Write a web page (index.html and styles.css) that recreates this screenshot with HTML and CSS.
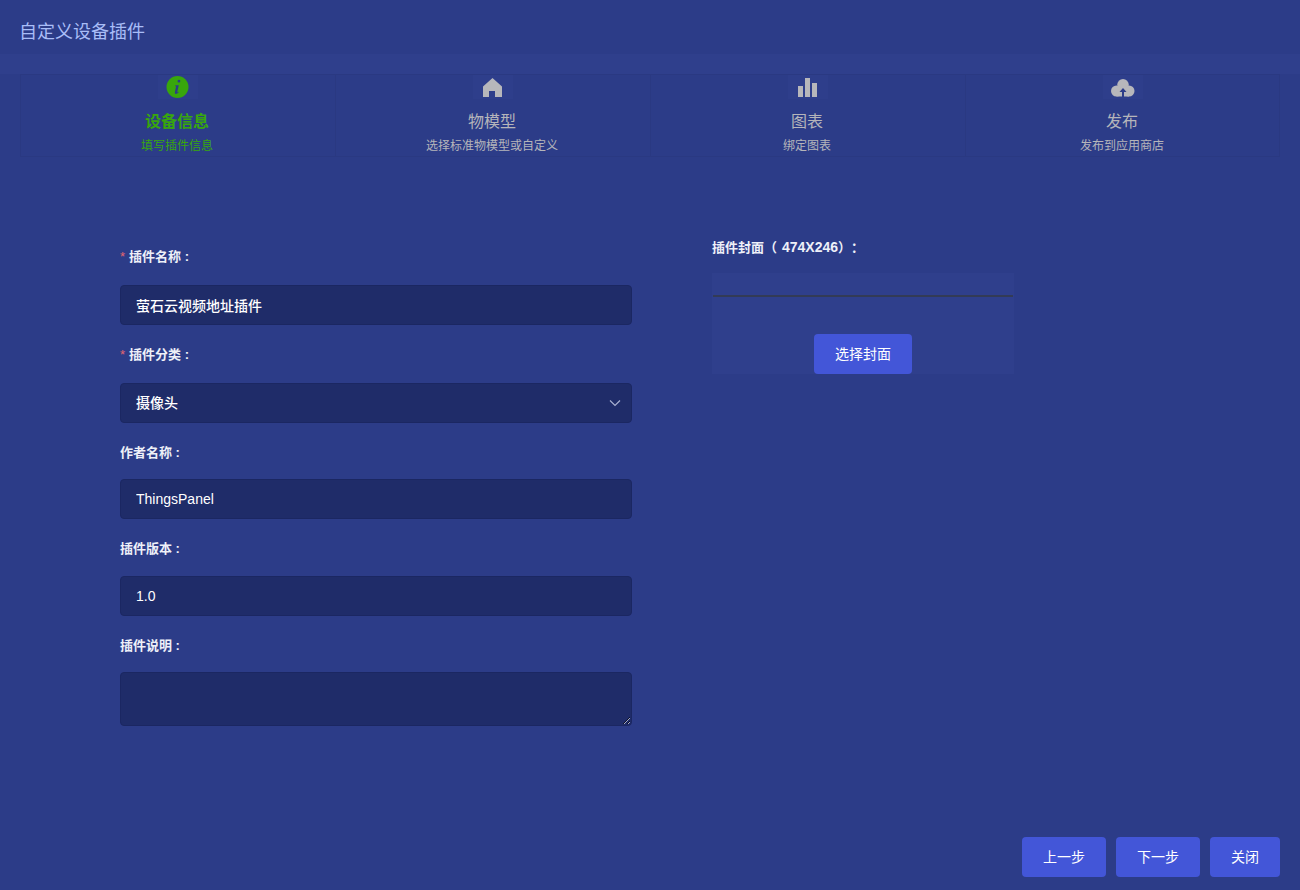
FILE: index.html
```html
<!DOCTYPE html>
<html lang="zh-CN">
<head>
 <meta charset="UTF-8">
 <title>自定义设备插件</title>
 <link rel="stylesheet" href="styles.css">
</head>
<body>
 <div class="page">
  <div class="header">自定义设备插件</div>
  <div class="band"></div>
  <div class="steps">
   <div class="step active">
    <div class="step-icon">
     <svg width="24" height="24" viewBox="0 0 24 24"><circle cx="11.500" cy="12" r="11" fill="#38a60c"/><path fill="#2c3c88" d="M13 4.800a1.400 1.400 0 1 1-.1 2.800 1.400 1.400 0 0 1 .1-2.800zM9.500 10.200h3.300l-1.500 6.600c-.1.500.2.600 1.100-.1l.3.500c-1.100 1.100-1.900 1.700-2.800 1.700-.9 0-1.200-.6-1-1.700l1.100-5.400c.1-.5-.3-.6-.9-.5z"/></svg>
    </div>
    <div class="step-title">设备信息</div>
    <div class="step-desc">填写插件信息</div>
   </div>
   <div class="step">
    <div class="step-icon">
     <svg width="24" height="24" viewBox="0 0 24 24"><path fill="#b7b7bb" d="M11.500 3 21 11.500V22h-7v-6H8v6H2V11.500z"/></svg>
    </div>
    <div class="step-title">物模型</div>
    <div class="step-desc">选择标准物模型或自定义</div>
   </div>
   <div class="step">
    <div class="step-icon">
     <svg width="24" height="24" viewBox="0 0 24 24"><path fill="#b7b7bb" d="M2 11h5v11H2zM9 3h5v19H9zM16 8h5v14h-5z"/></svg>
    </div>
    <div class="step-title">图表</div>
    <div class="step-desc">绑定图表</div>
   </div>
   <div class="step">
    <div class="step-icon">
     <svg width="24" height="24" viewBox="0 0 24 24"><g fill="#b7b7bb"><circle cx="12" cy="9.800" r="5.800"/><circle cx="5.500" cy="16" r="5.500"/><circle cx="18" cy="16" r="5.500"/><rect x="5.500" y="12" width="12.500" height="9.500"/></g><path fill="#2c3c88" d="M12 13l3.500 4H13v5h-2v-5H8.500z"/></svg>
    </div>
    <div class="step-title">发布</div>
    <div class="step-desc">发布到应用商店</div>
   </div>
  </div>

  <div class="main">
   <div class="form-col">
    <div class="form-item required">
     <label class="form-label"><span class="star">*</span>插件名称 :</label>
     <input class="field" type="text" value="萤石云视频地址插件">
    </div>
    <div class="form-item required">
     <label class="form-label"><span class="star">*</span>插件分类 :</label>
     <div class="select-wrap">
      <select class="field select">
       <option>摄像头</option>
      </select>
      <svg class="chevron" width="12" height="8" viewBox="0 0 12 8"><path d="M1 1.500l5 5 5-5" fill="none" stroke="#a8b0d0" stroke-width="1.200"/></svg>
     </div>
    </div>
    <div class="form-item">
     <label class="form-label">作者名称 :</label>
     <input class="field" type="text" value="ThingsPanel">
    </div>
    <div class="form-item">
     <label class="form-label">插件版本 :</label>
     <input class="field" type="text" value="1.0">
    </div>
    <div class="form-item">
     <label class="form-label">插件说明 :</label>
     <textarea class="field area"></textarea>
    </div>
   </div>
   <div class="cover-col">
    <div class="cover-label">插件封面（<span class="cover-size">474X246</span>）：</div>
    <div class="cover-box">
     <div class="cover-line"></div>
     <button class="btn cover-btn">选择封面</button>
    </div>
   </div>
  </div>

  <div class="footer">
   <button class="btn">上一步</button>
   <button class="btn">下一步</button>
   <button class="btn btn-close">关闭</button>
  </div>
 </div>
</body>
</html>
```

FILE: styles.css
```css
* {
 box-sizing: border-box;
}
html, body {
 margin: 0;
 height: 100%;
}
body {
 background: #2c3c88;
 font-family: "Liberation Sans", "Noto Sans CJK SC", sans-serif;
 overflow: hidden;
}
.page {
 height: 100vh;
 display: flex;
 flex-direction: column;
}
.header {
 height: 54px;
 padding: 20px 19px 0;
 font-size: 18px;
 line-height: 24px;
 color: #a9bdf7;
}
.band {
 height: 20px;
 background: #2f3f8c;
}
.steps {
 display: flex;
 margin: 0 20px;
 height: 83px;
 border-top: 1px solid #2a3982;
 border-bottom: 1px solid #2a3982;
}
.step {
 width: 315px;
 padding-right: 2px;
 display: flex;
 flex-direction: column;
 align-items: center;
 border-left: 1px solid #2a3982;
 color: #b5b5ba;
}
.step:last-child {
 border-right: 1px solid #2a3982;
 padding-right: 1px;
}
.step-icon {
 width: 40px;
 height: 24px;
 margin-left: 2px;
 background: #2e3e8b;
 display: flex;
 align-items: center;
 justify-content: center;
}
.step-title {
 margin-top: 11px;
 font-size: 16px;
 line-height: 24px;
}
.step-desc {
 margin-top: 3px;
 font-size: 12px;
 line-height: 18px;
}
.step.active {
 color: #38a60c;
}
.step.active .step-title {
 font-weight: bold;
}
.main {
 flex: 1;
 display: flex;
 padding: 90px 0 0 120px;
}
.form-col {
 width: 512px;
}
.form-item {
 margin-bottom: 20px;
}
.form-label {
 display: block;
 height: 20px;
 margin-bottom: 16.4px;
 font-size: 13px;
 line-height: 20px;
 font-weight: bold;
 color: #eef0f8;
}
.required .form-label {
 margin-bottom: 18px;
}
.star {
 color: #e2656f;
 font-weight: normal;
 margin-right: 4px;
}
.field {
 display: block;
 width: 100%;
 height: 40px;
 padding: 0 15px;
 background: #1f2c69;
 border: 1px solid #1b2762;
 border-radius: 4px;
 color: #fff;
 font-family: inherit;
 font-size: 14px;
 font-weight: 500;
 outline: none;
}
.select-wrap {
 position: relative;
}
.select {
 appearance: none;
}
.chevron {
 position: absolute;
 top: 16px;
 right: 11px;
}
.area {
 height: 54px;
 color-scheme: dark;
 resize: vertical;
}
.cover-col {
 margin-left: 80px;
 width: 302px;
 margin-top: -10px;
}
.cover-label {
 height: 20px;
 font-size: 13px;
 line-height: 20px;
 font-weight: bold;
 color: #eef0f8;
 text-spacing-trim: space-all;
}
.cover-size {
 padding-left: 5px;
 font-size: 14px;
}
.cover-box {
 margin-top: 16px;
 height: 101px;
 background: #2f3f8c;
 display: flex;
 flex-direction: column;
 align-items: center;
 justify-content: space-between;
 padding: 22px 1px 0;
}
.cover-line {
 width: 100%;
 height: 2px;
 background: #333b56;
}
.btn {
 height: 40px;
 width: 84px;
 padding: 0 0 2px;
 background: #4356d8;
 border: none;
 border-radius: 4px;
 color: #fff;
 font-family: inherit;
 font-size: 14px;
}
.cover-btn {
 width: 98px;
}
.btn-close {
 width: 70px;
}
.footer {
 display: flex;
 justify-content: flex-end;
 gap: 10px;
 padding: 0 20px 13px;
}
```
